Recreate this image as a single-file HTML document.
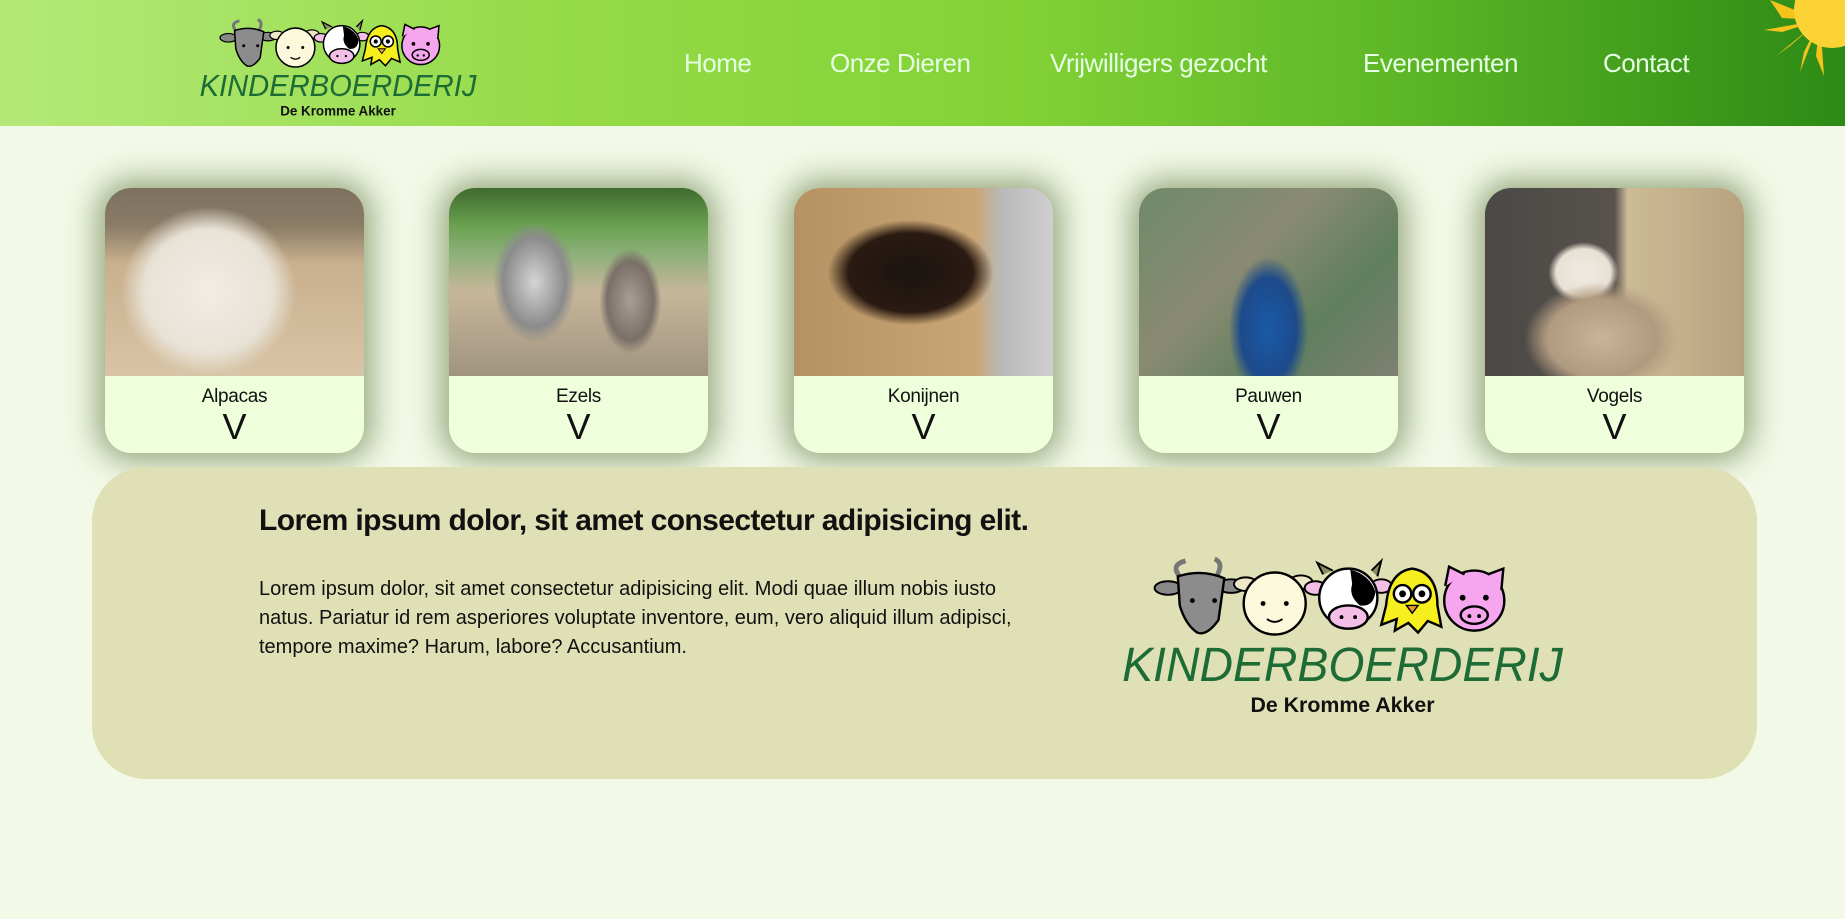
<!DOCTYPE html>
<html><head><meta charset="utf-8">
<style>
*{margin:0;padding:0;box-sizing:border-box}
html,body{width:1845px;height:919px;overflow:hidden}
body{background:#f2f9e6;font-family:"Liberation Sans",sans-serif;position:relative}
header{position:absolute;left:0;top:0;width:1845px;height:126px;background:linear-gradient(90deg,#b4e978 0%,#95db48 30%,#82d236 55%,#5fb827 75%,#2d8a15 100%);overflow:hidden}
.nav a{position:absolute;top:48px;color:#e6ffe4;font-size:26px;text-decoration:none;letter-spacing:-0.5px;white-space:nowrap}
.card{position:absolute;top:188px;width:259px;height:265px;border-radius:26px;overflow:hidden;background:#efffdc;box-shadow:0 0 30px 8px rgba(60,85,25,.5)}
.card .img{height:188px}
.card .t{text-align:center;font-size:19px;margin-top:10px;color:#111;letter-spacing:-0.3px}
.card .v{text-align:center;font-size:36px;line-height:36px;color:#111;margin-top:1px}
.info{position:absolute;left:92px;top:467px;width:1665px;height:312px;border-radius:54px;background:#dfe0b5}
.info h1{position:absolute;left:167px;top:37px;font-size:30px;font-weight:bold;color:#111;letter-spacing:-0.6px;white-space:nowrap}
.info p{position:absolute;left:167px;top:108px;width:785px;font-size:20px;line-height:29px;color:#111}
</style></head><body>
<svg width="0" height="0" style="position:absolute">
<defs>
<g id="logo">
 <path d="M72 30 Q62 18 78 14 M110 30 Q118 16 108 12" stroke="#777" stroke-width="5" fill="none"/>
 <ellipse cx="60" cy="42" rx="14" ry="7" fill="#888" stroke="#000" stroke-width="2"/>
 <ellipse cx="125" cy="40" rx="14" ry="7" fill="#888" stroke="#000" stroke-width="2"/>
 <path d="M70 30 Q95 22 118 32 L112 75 Q100 92 90 88 Q78 80 72 60 Z" fill="#8c8c8c" stroke="#000" stroke-width="2.5"/>
 <circle cx="85" cy="55" r="2.5"/><circle cx="108" cy="55" r="2.5"/>
 <ellipse cx="140" cy="38" rx="12" ry="7" fill="#eee8c8" stroke="#000" stroke-width="2"/>
 <ellipse cx="197" cy="36" rx="12" ry="7" fill="#eee8c8" stroke="#000" stroke-width="2"/>
 <circle cx="170" cy="58" r="32" fill="#fbf8dc" stroke="#000" stroke-width="2.5"/>
 <circle cx="158" cy="58" r="2.5"/><circle cx="182" cy="58" r="2.5"/>
 <path d="M162 74 Q170 80 178 74" stroke="#000" stroke-width="2" fill="none"/>
 <path d="M220 28 L214 16 L230 24 M270 24 L280 14 L276 30" stroke="#000" stroke-width="2" fill="#8a8a60"/>
 <ellipse cx="212" cy="42" rx="11" ry="7" fill="#f4bfe6" stroke="#000" stroke-width="2"/>
 <ellipse cx="280" cy="40" rx="11" ry="7" fill="#f4bfe6" stroke="#000" stroke-width="2"/>
 <circle cx="246" cy="52" r="30" fill="#fff" stroke="#000" stroke-width="2.5"/>
 <path d="M248 23 Q268 28 274 46 Q272 62 258 60 Q246 50 250 38 Z" fill="#000"/>
 <ellipse cx="246" cy="72" rx="20" ry="12" fill="#f4bfe6" stroke="#000" stroke-width="2.5"/>
 <circle cx="239" cy="72" r="2"/><circle cx="253" cy="72" r="2"/>
 <path d="M285 60 Q288 25 312 22 Q338 26 338 60 L342 82 L328 76 L318 88 L308 78 L294 86 L296 74 L280 80 Z" fill="#f7ee1e" stroke="#000" stroke-width="2.5"/>
 <circle cx="302" cy="48" r="9" fill="#fff" stroke="#000" stroke-width="2.5"/><circle cx="322" cy="48" r="9" fill="#fff" stroke="#000" stroke-width="2.5"/>
 <circle cx="302" cy="48" r="3.5"/><circle cx="322" cy="48" r="3.5"/>
 <path d="M306 60 L318 60 L312 68 Z" fill="#f0a030" stroke="#000" stroke-width="1.5"/>
 <circle cx="376" cy="55" r="31" fill="#f6a6ee" stroke="#000" stroke-width="2.5"/>
 <path d="M346 40 L350 20 L366 28 M390 28 L406 22 L404 44" fill="#f6a6ee" stroke="#000" stroke-width="2.5"/>
 <circle cx="364" cy="52" r="3"/><circle cx="388" cy="52" r="3"/>
 <ellipse cx="376" cy="70" rx="14" ry="9" fill="#f6a6ee" stroke="#000" stroke-width="2.5"/>
 <circle cx="371" cy="71" r="2"/><circle cx="381" cy="71" r="2"/>
 <text x="240" y="138" text-anchor="middle" font-family="Liberation Sans,sans-serif" font-style="italic" font-size="50" fill="#1d6b35" textLength="455" lengthAdjust="spacingAndGlyphs">KINDERBOERDERIJ</text>
 <text x="240" y="170" text-anchor="middle" font-family="Liberation Sans,sans-serif" font-size="22" font-weight="bold" fill="#111" textLength="190" lengthAdjust="spacingAndGlyphs">De Kromme Akker</text>
</g>
</defs></svg>

<header>
 <svg style="position:absolute;left:192px;top:12px" width="292" height="110" viewBox="0 0 480 180"><use href="#logo"/></svg>
 <div class="nav">
  <a style="left:684px">Home</a>
  <a style="left:830px">Onze Dieren</a>
  <a style="left:1050px">Vrijwilligers gezocht</a>
  <a style="left:1363px">Evenementen</a>
  <a style="left:1603px">Contact</a>
 </div>
 <svg style="position:absolute;left:1760px;top:-40px" width="120" height="120" viewBox="0 0 120 120">
  <g fill="#f6c21c">
   <polygon points="60,60 10,40 22,58"/><polygon points="60,60 4,70 22,72"/><polygon points="60,60 16,96 30,86"/><polygon points="60,60 40,112 44,92"/><polygon points="60,60 64,116 56,96"/>
  </g>
  <circle cx="72" cy="50" r="38" fill="#fbd335"/>
 </svg>
</header>

<div class="card" style="left:105px"><div class="img" style="background:radial-gradient(ellipse 45% 60% at 40% 55%,#f1ede5 0%,#e8e2d6 55%,transparent 75%),linear-gradient(180deg,#7c7060 0%,#8a7c66 20%,#c9b08e 40%,#d8c4a6 100%)"></div><div class="t">Alpacas</div><div class="v">V</div></div>
<div class="card" style="left:449px"><div class="img" style="background:radial-gradient(ellipse 20% 40% at 33% 50%,#d5d5d5,#8b8b8b 60%,transparent 80%),radial-gradient(ellipse 15% 35% at 70% 60%,#a99e95,#7a7068 60%,transparent 80%),linear-gradient(180deg,#3f6a2e 0%,#6aa150 20%,#8db07a 35%,#c7b69a 55%,#a09480 100%)"></div><div class="t">Ezels</div><div class="v">V</div></div>
<div class="card" style="left:794px"><div class="img" style="background:radial-gradient(ellipse 40% 35% at 45% 45%,#1a1410,#2a1a12 60%,transparent 80%),linear-gradient(90deg,#b59263 0%,#c9a675 70%,#b9b9b9 80%,#cfcfcf 100%)"></div><div class="t">Konijnen</div><div class="v">V</div></div>
<div class="card" style="left:1139px"><div class="img" style="background:radial-gradient(ellipse 18% 45% at 50% 75%,#1a5aa8,#1d4a8a 60%,transparent 85%),linear-gradient(135deg,#6e8a6a,#8a8a72 40%,#5f7f5e 70%,#7f8070)"></div><div class="t">Pauwen</div><div class="v">V</div></div>
<div class="card" style="left:1485px"><div class="img" style="background:radial-gradient(ellipse 35% 35% at 45% 80%,#c8b49a,#b09a80 60%,transparent 85%),radial-gradient(ellipse 15% 18% at 38% 45%,#f0ebe3,#e8e0d4 70%,transparent 90%),linear-gradient(90deg,#4b4845 0%,#57524d 50%,#cdbb96 55%,#b6a27e 100%)"></div><div class="t">Vogels</div><div class="v">V</div></div>

<div class="info">
 <h1>Lorem ipsum dolor, sit amet consectetur adipisicing elit.</h1>
 <p>Lorem ipsum dolor, sit amet consectetur adipisicing elit. Modi quae illum nobis iusto natus. Pariatur id rem asperiores voluptate inventore, eum, vero aliquid illum adipisci, tempore maxime? Harum, labore? Accusantium.</p>
 <svg style="position:absolute;left:1018px;top:80px" width="465" height="175" viewBox="0 0 480 180"><use href="#logo"/></svg>
</div>
</body></html>
